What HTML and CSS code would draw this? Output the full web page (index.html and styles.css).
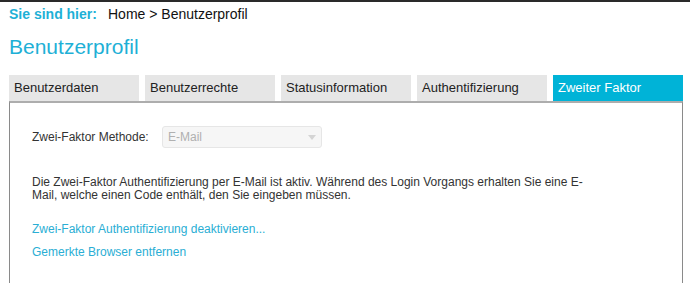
FILE: index.html
```html
<!DOCTYPE html>
<html lang="de">
<head>
<meta charset="utf-8">
<title>Benutzerprofil</title>
<link rel="stylesheet" href="styles.css">
</head>
<body>
<div class="page">
  <div class="breadcrumb"><span class="bc-label">Sie sind hier:</span><span class="bc-path">Home &gt; Benutzerprofil</span></div>
  <h1 class="title">Benutzerprofil</h1>
  <div class="tabs">
    <div class="tab">Benutzerdaten</div>
    <div class="tab">Benutzerrechte</div>
    <div class="tab">Statusinformation</div>
    <div class="tab">Authentifizierung</div>
    <div class="tab active">Zweiter Faktor</div>
  </div>
  <div class="panel">
    <div class="field">
      <span class="field-label">Zwei-Faktor Methode:</span>
      <div class="select">
        <span>E-Mail</span>
        <svg class="caret" width="8" height="5" viewBox="0 0 8 5"><path d="M0 0 L8 0 L4 5 Z" fill="#d4d4d4"/></svg>
      </div>
    </div>
    <p class="info">Die Zwei-Faktor Authentifizierung per E-Mail ist aktiv. Während des Login Vorgangs erhalten Sie eine E-Mail, welche einen Code enthält, den Sie eingeben müssen.</p>
    <a class="link first" href="#">Zwei-Faktor Authentifizierung deaktivieren...</a>
    <a class="link" href="#">Gemerkte Browser entfernen</a>
  </div>
</div>
</body>
</html>
```
FILE: styles.css
```css
html, body {
  margin: 0;
  padding: 0;
  background: #fff;
}
body {
  font-family: "Liberation Sans", Arial, sans-serif;
  color: #222;
  border-top: 2px solid #2a2a2a;
  height: 281px;
  overflow: hidden;
}
.page {
  padding: 0 7px 0 9px;
}
.breadcrumb {
  padding-top: 4px;
  font-size: 14px;
  line-height: 16px;
  display: flex;
}
.bc-label {
  color: #1eb0d6;
  font-weight: bold;
  width: 99px;
}
.bc-path {
  color: #111;
}
.title {
  margin: 13px 0 0;
  font-size: 21px;
  line-height: 24px;
  font-weight: normal;
  color: #1eb0d6;
}
.tabs {
  margin-top: 16px;
  display: flex;
  gap: 6px;
}
.tab {
  width: 130px;
  height: 26px;
  line-height: 26px;
  box-sizing: border-box;
  padding-left: 5px;
  background: #e6e6e6;
  font-size: 13px;
  color: #222;
}
.tab.active {
  background: #00b3d7;
  color: #fff;
}
.panel {
  border-top: 2px solid #adadad;
  border-left: 1px solid #8a8a8a;
  border-right: 1px solid #8a8a8a;
  padding: 23px 22px 30px;
  font-size: 12px;
  color: #333;
}
.field {
  display: flex;
  align-items: center;
  height: 22px;
}
.field-label {
  width: 130px;
}
.select {
  width: 160px;
  height: 22px;
  box-sizing: border-box;
  border: 1px solid #e6e6e6;
  border-radius: 3px;
  background: #f6f6f6;
  color: #b0b0b0;
  display: flex;
  align-items: center;
  justify-content: space-between;
  padding: 0 5px;
}
.caret {
  margin-top: 1px;
}
.info {
  margin: 28px 0 0;
  width: 560px;
  line-height: 13px;
}
.link {
  display: block;
  color: #2aaed4;
  text-decoration: none;
  line-height: 14px;
  margin-top: 9px;
}
.link.first {
  margin-top: 20px;
}
```
